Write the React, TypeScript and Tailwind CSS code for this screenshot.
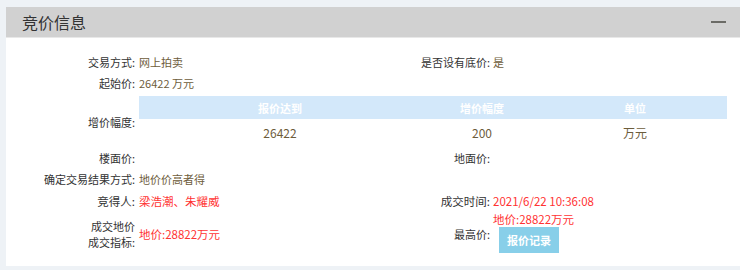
const bidTable = [
  { head: "报价达到", val: "26422", w: "w-[282px]" },
  { head: "增价幅度", val: "200", w: "w-[122px]" },
  { head: "单位", val: "万元", w: "w-[184px]" },
];

function Row({
  label,
  value,
  label2,
  value2,
  red,
  className = "",
}: {
  label: string;
  value?: string;
  label2?: string;
  value2?: string;
  red?: boolean;
  className?: string;
}) {
  const vc = red ? "text-[#ff3333]" : "text-[#6d5c3b]";
  return (
    <div className={`flex h-[21px] items-center ${className}`}>
      <div className="w-[129px] text-right text-[#333]">{label}</div>
      <div className={`w-[216px] pl-[4px] ${vc}`}>{value}</div>
      <div className="w-[139px] text-right text-[#333]">{label2}</div>
      <div className={`pl-[3px] ${vc}`}>{value2}</div>
    </div>
  );
}

export default function App() {
  return (
    <div
      className="min-h-[270px] bg-[#eef2f6] pt-[7px] pl-[6px]"
      style={{ fontFamily: '"Noto Sans CJK SC", "Noto Sans", sans-serif' }}
    >
      <div className="bg-white pb-[13px] text-[11px] leading-[16px]">
        {/* header */}
        <div className="h-[31px] bg-[#d1d1d1] border-b border-[#e8e8e8] flex items-center justify-between pl-[16px] pr-[14px]">
          <span className="text-[16px] leading-none text-[#333]">竞价信息</span>
          <span className="w-[15px] h-[2px] bg-[#6b6b66]" />
        </div>

        <div className="pt-[13px]">
          <Row label="交易方式:" value="网上拍卖" label2="是否设有底价:" value2="是" />
          <Row label="起始价:" value="26422 万元" />

          {/* 增价幅度 */}
          <div className="flex items-center mt-[3px]">
            <div className="w-[129px] text-right text-[#333] pt-[2px]">增价幅度:</div>
            <div className="pl-[4px]">
              <div className="w-[588px]">
                <div className="flex h-[23px] bg-[#d3e8fa] items-center font-bold text-white">
                  {bidTable.map((c) => (
                    <div key={c.head} className={`${c.w} text-center`}>
                      {c.head}
                    </div>
                  ))}
                </div>
                <div className="flex h-[27px] items-center text-[#6d5c3b] text-[12px]">
                  {bidTable.map((c) => (
                    <div key={c.head} className={`${c.w} text-center`}>
                      {c.val}
                    </div>
                  ))}
                </div>
              </div>
            </div>
          </div>

          <Row label="楼面价:" label2="地面价:" className="mt-[1px]" />
          <Row label="确定交易结果方式:" value="地价价高者得" />
          <Row
            label="竞得人:"
            value="梁浩潮、朱耀威"
            label2="成交时间:"
            value2="2021/6/22 10:36:08"
            red
            className="mt-[1px] text-[11.5px]"
          />

          {/* 成交地价 / 最高价 */}
          <div className="flex items-center">
            <div className="w-[129px] text-right text-[#333] pt-[4px]">
              <div>成交地价</div>
              <div>成交指标:</div>
            </div>
            <div className="w-[216px] pl-[4px] pt-[4px] text-[#ff3333] text-[11.5px]">地价:28822万元</div>
            <div className="w-[139px] text-right text-[#333] pt-[4px]">最高价:</div>
            <div className="pl-[3px] flex flex-col items-start">
              <span className="text-[#ff3333] text-[11.5px]">地价:28822万元</span>
              <button className="ml-[6px] w-[60px] h-[26px] bg-[#88cfe9] text-white font-bold text-[11px]">
                报价记录
              </button>
            </div>
          </div>
        </div>
      </div>
    </div>
  );
}
